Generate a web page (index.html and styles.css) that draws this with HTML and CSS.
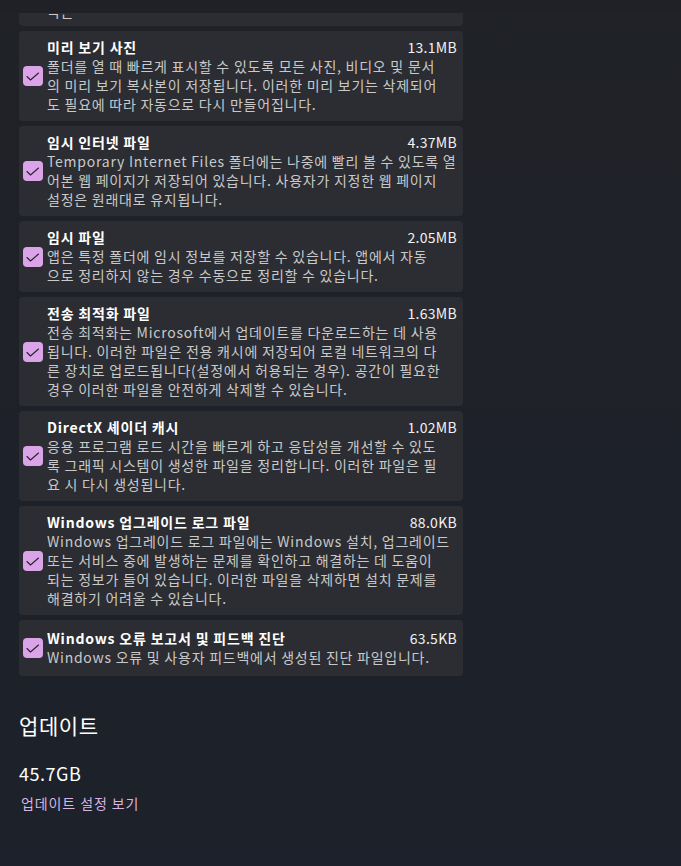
FILE: index.html
```html
<!DOCTYPE html>
<html>
  <head>
    <meta charset="utf-8">
    <title>임시 파일</title>
    <link rel="stylesheet" href="styles.css">
  </head>
  <body>
    <div class="topbar"></div>
    <div class="page">
      <div class="card cut">
        <div class="cut-text">극은</div>
      </div>

      <div class="card">
        <div class="check"><svg viewBox="0 0 20 20"><path d="M4 10.5 L7.5 14 L15.5 7"/></svg></div>
        <div class="body">
          <div class="head"><span class="title">미리 보기 사진</span><span class="size">13.1MB</span></div>
          <div class="desc">폴더를 열 때 빠르게 표시할 수 있도록 모든 사진, 비디오 및 문서<br>의 미리 보기 복사본이 저장됩니다. 이러한 미리 보기는 삭제되어<br>도 필요에 따라 자동으로 다시 만들어집니다.</div>
        </div>
      </div>

      <div class="card">
        <div class="check"><svg viewBox="0 0 20 20"><path d="M4 10.5 L7.5 14 L15.5 7"/></svg></div>
        <div class="body">
          <div class="head"><span class="title">임시 인터넷 파일</span><span class="size">4.37MB</span></div>
          <div class="desc">Temporary Internet Files 폴더에는 나중에 빨리 볼 수 있도록 열<br>어본 웹 페이지가 저장되어 있습니다. 사용자가 지정한 웹 페이지<br>설정은 원래대로 유지됩니다.</div>
        </div>
      </div>

      <div class="card">
        <div class="check"><svg viewBox="0 0 20 20"><path d="M4 10.5 L7.5 14 L15.5 7"/></svg></div>
        <div class="body">
          <div class="head"><span class="title">임시 파일</span><span class="size">2.05MB</span></div>
          <div class="desc">앱은 특정 폴더에 임시 정보를 저장할 수 있습니다. 앱에서 자동<br>으로 정리하지 않는 경우 수동으로 정리할 수 있습니다.</div>
        </div>
      </div>

      <div class="card">
        <div class="check"><svg viewBox="0 0 20 20"><path d="M4 10.5 L7.5 14 L15.5 7"/></svg></div>
        <div class="body">
          <div class="head"><span class="title">전송 최적화 파일</span><span class="size">1.63MB</span></div>
          <div class="desc">전송 최적화는 Microsoft에서 업데이트를 다운로드하는 데 사용<br>됩니다. 이러한 파일은 전용 캐시에 저장되어 로컬 네트워크의 다<br>른 장치로 업로드됩니다(설정에서 허용되는 경우). 공간이 필요한<br>경우 이러한 파일을 안전하게 삭제할 수 있습니다.</div>
        </div>
      </div>

      <div class="card">
        <div class="check"><svg viewBox="0 0 20 20"><path d="M4 10.5 L7.5 14 L15.5 7"/></svg></div>
        <div class="body">
          <div class="head"><span class="title">DirectX 셰이더 캐시</span><span class="size">1.02MB</span></div>
          <div class="desc">응용 프로그램 로드 시간을 빠르게 하고 응답성을 개선할 수 있도<br>록 그래픽 시스템이 생성한 파일을 정리합니다. 이러한 파일은 필<br>요 시 다시 생성됩니다.</div>
        </div>
      </div>

      <div class="card">
        <div class="check"><svg viewBox="0 0 20 20"><path d="M4 10.5 L7.5 14 L15.5 7"/></svg></div>
        <div class="body">
          <div class="head"><span class="title">Windows 업그레이드 로그 파일</span><span class="size">88.0KB</span></div>
          <div class="desc">Windows 업그레이드 로그 파일에는 Windows 설치, 업그레이드<br>또는 서비스 중에 발생하는 문제를 확인하고 해결하는 데 도움이<br>되는 정보가 들어 있습니다. 이러한 파일을 삭제하면 설치 문제를<br>해결하기 어려울 수 있습니다.</div>
        </div>
      </div>

      <div class="card last">
        <div class="check"><svg viewBox="0 0 20 20"><path d="M4 10.5 L7.5 14 L15.5 7"/></svg></div>
        <div class="body">
          <div class="head"><span class="title">Windows 오류 보고서 및 피드백 진단</span><span class="size">63.5KB</span></div>
          <div class="desc">Windows 오류 및 사용자 피드백에서 생성된 진단 파일입니다.</div>
        </div>
      </div>

      <div class="section">
        <h2 class="section-title">업데이트</h2>
        <div class="amount">45.7GB</div>
        <a class="link" href="#">업데이트 설정 보기</a>
      </div>
    </div>
  </body>
</html>
```

FILE: styles.css
```css
html, body {
  margin: 0;
  padding: 0;
}
body {
  height: 866px;
  overflow: hidden;
  background: linear-gradient(180deg, #202227 0%, #1e2129 50%, #1c212b 100%);
  font-family: "Noto Sans CJK KR", "Noto Sans", sans-serif;
  font-size: 14px;
  line-height: 19px;
  color: #ffffff;
}
.topbar {
  height: 13px;
  background: #1f2126;
}
.page {
  width: 444px;
  margin-left: 19px;
}
.card {
  display: flex;
  align-items: center;
  gap: 4px;
  padding: 7px 6px 7px 4px;
  margin-bottom: 5px;
  background: #2b2d33;
  border-radius: 4px;
}
.card.last {
  padding-top: 9px;
  padding-bottom: 9px;
}
.card.cut {
  display: block;
  height: 13px;
  padding: 0 6px 0 28px;
  overflow: hidden;
  border-radius: 0 0 4px 4px;
}
.cut-text {
  margin-top: -11px;
  color: #c8c8c8;
  letter-spacing: 0.75px;
}
.check {
  flex: none;
  width: 20px;
  height: 20px;
  border-radius: 4px;
  background: #dba4e8;
}
.check svg {
  display: block;
  width: 20px;
  height: 20px;
}
.check path {
  fill: none;
  stroke: #2b1f30;
  stroke-width: 1.1;
  stroke-linecap: round;
  stroke-linejoin: round;
}
.body {
  flex: 1;
  min-width: 0;
}
.head {
  display: flex;
  justify-content: space-between;
  align-items: baseline;
}
.title {
  font-weight: 700;
  letter-spacing: 0.8px;
}
.size {
  color: #f2f2f2;
  letter-spacing: 0.3px;
}
.desc {
  color: #c9c9c9;
  white-space: nowrap;
  letter-spacing: 0.75px;
}
.section {
  padding-top: 30px;
}
.section-title {
  margin: 0;
  font-size: 21px;
  line-height: 28px;
  font-weight: 400;
  letter-spacing: 0.6px;
}
.amount {
  margin-top: 22px;
  font-size: 18px;
  line-height: 24px;
  letter-spacing: 0.5px;
}
.link {
  display: inline-block;
  margin-top: 9px;
  margin-left: 2px;
  color: #d8b4e2;
  text-decoration: none;
  letter-spacing: 0.9px;
}
```
